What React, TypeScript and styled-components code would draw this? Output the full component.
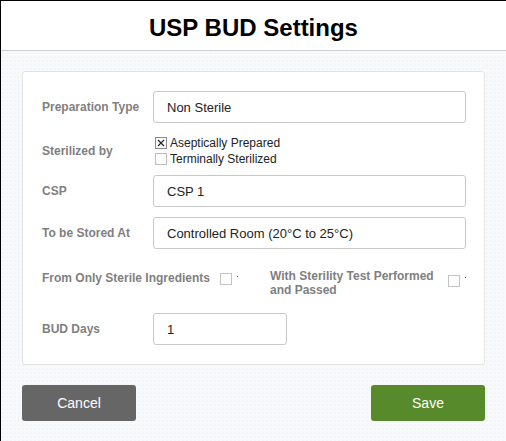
import styled, { createGlobalStyle } from "styled-components";

const GlobalStyle = createGlobalStyle`
  html, body {
    margin: 0;
    padding: 0;
    background: #ffffff;
  }
  body {
    font-family: "Liberation Sans", Arial, Helvetica, sans-serif;
  }
`;

const Frame = styled.div`
  width: 506px;
  height: 441px;
  box-sizing: border-box;
  border-left: 1px solid #000;
  border-top: 1px solid #000;
  display: flex;
  flex-direction: column;
  overflow: hidden;
`;

const Header = styled.div`
  height: 49px;
  display: flex;
  align-items: center;
  justify-content: center;
  background: #fff;
  border-bottom: 1px solid #cfcfcf;
`;

const Title = styled.h1`
  margin: 0;
  font-size: 24px;
  font-weight: 700;
  color: #000;
  padding-top: 4px;
`;

const Body = styled.div`
  flex: 1;
  padding: 20px 21px 0 21px;
  background-color: #f8f9fb;
  background-image: radial-gradient(#eceef2 0.6px, transparent 0.8px);
  background-size: 4px 4px;
`;

const Card = styled.div`
  background: #fff;
  border: 1px solid #e3e3e3;
  border-radius: 3px;
  padding: 19px 18px 19px 19px;
`;

const Row = styled.div<{ $top?: number }>`
  display: flex;
  align-items: center;
  margin-top: ${(p) => p.$top ?? 0}px;
`;

const Label = styled.div`
  width: 111px;
  flex-shrink: 0;
  font-size: 12px;
  font-weight: 700;
  color: #7f7f7f;
`;

const Field = styled.div<{ $width?: number }>`
  box-sizing: border-box;
  height: 32px;
  ${(p) => (p.$width ? `width: ${p.$width}px;` : "flex: 1;")}
  border: 1px solid #c9c9c9;
  border-radius: 3px;
  display: flex;
  align-items: center;
  padding-left: 13px;
  font-size: 13px;
  color: #222;
`;

const CheckList = styled.div`
  display: flex;
  flex-direction: column;
  padding: 1px 0 0 2px;
`;

const CheckItem = styled.div`
  display: flex;
  align-items: center;
  height: 16px;
  font-size: 12px;
  color: #222;
`;

const Box = styled.span<{ $checked?: boolean }>`
  box-sizing: border-box;
  width: 12px;
  height: 12px;
  border: 1px solid ${(p) => (p.$checked ? "#8a8a8a" : "#bdbdbd")};
  background: #fff;
  display: inline-flex;
  align-items: center;
  justify-content: center;
  margin-right: 3px;
  flex-shrink: 0;
`;

const FlagRow = styled.div`
  display: flex;
  align-items: flex-start;
  margin-top: 20px;
`;

const FlagGroup = styled.div<{ $width: number }>`
  width: ${(p) => p.$width}px;
  display: flex;
  align-items: flex-start;
`;

const FlagLabel = styled.div<{ $width?: number; $top?: number }>`
  font-size: 12px;
  font-weight: 700;
  color: #7f7f7f;
  line-height: 14px;
  ${(p) => (p.$width ? `width: ${p.$width}px;` : "")}
  margin-top: ${(p) => p.$top ?? 0}px;
`;

const FlagBox = styled.span<{ $left: number; $top: number }>`
  box-sizing: border-box;
  width: 12px;
  height: 12px;
  border: 1px solid #c4c4c4;
  margin-left: ${(p) => p.$left}px;
  margin-top: ${(p) => p.$top}px;
  flex-shrink: 0;
`;

const Dot = styled.span<{ $top: number }>`
  width: 1px;
  height: 1px;
  background: #666;
  margin-left: 5px;
  margin-top: ${(p) => p.$top}px;
`;

const Footer = styled.div`
  display: flex;
  justify-content: space-between;
  margin-top: 20px;
`;

const Button = styled.button<{ $tone: "cancel" | "save" }>`
  width: 114px;
  height: 36px;
  border: none;
  border-radius: 3px;
  color: #fff;
  font-family: "Liberation Sans", Arial, sans-serif;
  font-size: 14px;
  background: ${(p) => (p.$tone === "save" ? "#568a2b" : "#666666")};
  cursor: pointer;
`;

function Cross() {
  return (
    <svg width="8" height="8" viewBox="0 0 8 8">
      <path d="M1 1 L7 7 M7 1 L1 7" stroke="#222" strokeWidth="1.2" />
    </svg>
  );
}

export default function App() {
  return (
    <>
      <GlobalStyle />
      <Frame>
        <Header>
          <Title>USP BUD Settings</Title>
        </Header>
        <Body>
          <Card>
            <Row>
              <Label>Preparation Type</Label>
              <Field>Non Sterile</Field>
            </Row>
            <Row $top={11}>
              <Label>Sterilized by</Label>
              <CheckList>
                <CheckItem>
                  <Box $checked>
                    <Cross />
                  </Box>
                  Aseptically Prepared
                </CheckItem>
                <CheckItem>
                  <Box />
                  Terminally Sterilized
                </CheckItem>
              </CheckList>
            </Row>
            <Row $top={8}>
              <Label>CSP</Label>
              <Field>CSP 1</Field>
            </Row>
            <Row $top={10}>
              <Label>To be Stored At</Label>
              <Field>Controlled Room (20°C to 25°C)</Field>
            </Row>
            <FlagRow>
              <FlagGroup $width={228}>
                <FlagLabel $top={2}>From Only Sterile Ingredients</FlagLabel>
                <FlagBox $left={10} $top={4} />
                <Dot $top={7} />
              </FlagGroup>
              <FlagGroup $width={196}>
                <FlagLabel $width={170}>
                  With Sterility Test Performed and Passed
                </FlagLabel>
                <FlagBox $left={8} $top={6} />
                <Dot $top={8} />
              </FlagGroup>
            </FlagRow>
            <Row $top={16}>
              <Label>BUD Days</Label>
              <Field $width={134}>1</Field>
            </Row>
          </Card>
          <Footer>
            <Button $tone="cancel">Cancel</Button>
            <Button $tone="save">Save</Button>
          </Footer>
        </Body>
      </Frame>
    </>
  );
}
